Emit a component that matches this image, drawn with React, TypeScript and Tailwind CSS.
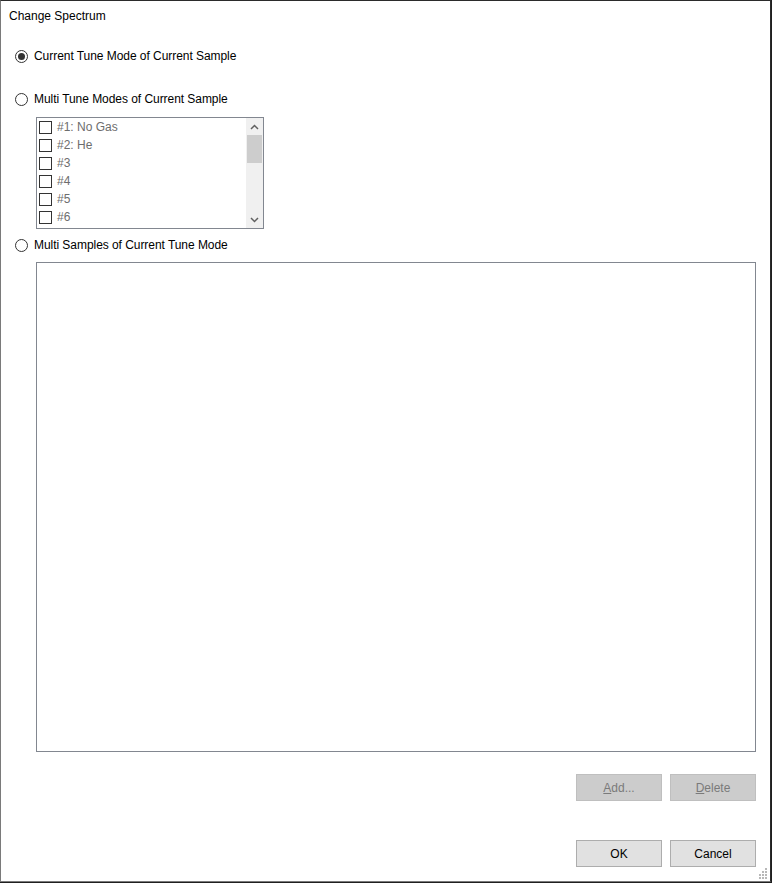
import React from "react";

const font = { fontFamily: '"Liberation Sans", Arial, sans-serif' };

function Radio({ checked, label }: { checked?: boolean; label: string }) {
  return (
    <div className="flex items-center h-[16px] ml-[14px]">
      <div className="w-[13px] h-[13px] rounded-full border border-[#333333] bg-white flex items-center justify-center">
        {checked && <div className="w-[7px] h-[7px] rounded-full bg-[#333333]" />}
      </div>
      <span className="ml-[6px] text-[12px] leading-[16px] text-black tracking-[-0.05px]">{label}</span>
    </div>
  );
}

const items = ["#1: No Gas", "#2: He", "#3", "#4", "#5", "#6"];

function Btn({ children, disabled }: { children: React.ReactNode; disabled?: boolean }) {
  return (
    <div
      className={
        "w-[86px] h-[27px] flex items-center justify-center text-[12px] border " +
        (disabled
          ? "bg-[#cccccc] border-[#bfbfbf] text-[#7a7a7a]"
          : "bg-[#e1e1e1] border-[#adadad] text-black")
      }
    >
      {children}
    </div>
  );
}

export default function App() {
  return (
    <div className="w-[772px] h-[883px] bg-[#1f1f1f]" style={font}>
      <div className="relative w-[771px] h-[882px] bg-white border border-t-[#2b2b2b] border-r-[#2b2b2b] border-l-[#7a7a7a] border-b-[#7a7a7a] flex flex-col">
        <div className="pt-[7px] pl-[8px] text-[12px] leading-[16px] text-black">Change Spectrum</div>

        <div className="mt-[24px]">
          <Radio checked label="Current Tune Mode of Current Sample" />
        </div>
        <div className="mt-[27px]">
          <Radio label="Multi Tune Modes of Current Sample" />
        </div>

        <div className="mt-[10px] ml-[35px] w-[228px] h-[112px] border border-[#828790] bg-white flex">
          <div className="flex-1 flex flex-col pl-[2px]">
            {items.map((t) => (
              <div key={t} className="h-[18px] flex items-center">
                <div className="w-[13px] h-[13px] border border-[#333333] bg-white" />
                <span className="ml-[5px] text-[12px] leading-[16px] text-[#6d6d6d]">{t}</span>
              </div>
            ))}
          </div>
          <div className="w-[17px] h-full bg-[#f0f0f0] flex flex-col">
            <div className="h-[17px] flex items-center justify-center">
              <svg width="9" height="6" viewBox="0 0 9 6">
                <path d="M1 5 L4.5 1.5 L8 5" stroke="#606060" strokeWidth="1.5" fill="none" />
              </svg>
            </div>
            <div className="mx-[1px] h-[28px] bg-[#cdcdcd]" />
            <div className="flex-1" />
            <div className="h-[17px] flex items-center justify-center">
              <svg width="9" height="6" viewBox="0 0 9 6">
                <path d="M1 1 L4.5 4.5 L8 1" stroke="#606060" strokeWidth="1.5" fill="none" />
              </svg>
            </div>
          </div>
        </div>

        <div className="mt-[8px]">
          <Radio label="Multi Samples of Current Tune Mode" />
        </div>

        <div className="mt-[9px] ml-[35px] w-[720px] h-[490px] border border-[#828790] bg-white" />

        <div className="mt-[22px] ml-[35px] w-[720px] flex justify-end gap-[8px]">
          <Btn disabled>
            <span>
              <span className="underline">A</span>dd...
            </span>
          </Btn>
          <Btn disabled>
            <span>
              <span className="underline">D</span>elete
            </span>
          </Btn>
        </div>

        <div className="mt-[39px] ml-[35px] w-[720px] flex justify-end gap-[8px]">
          <Btn>OK</Btn>
          <Btn>Cancel</Btn>
        </div>

        <svg className="absolute right-[2px] bottom-[2px]" width="11" height="11" viewBox="0 0 11 11">
          {[
            [8, 0],
            [8, 3],
            [5, 3],
            [8, 6],
            [5, 6],
            [2, 6],
            [8, 9],
            [5, 9],
            [2, 9],
          ].map(([x, y], i) => (
            <rect key={i} x={x} y={y} width="2" height="2" fill="#b8b8b8" />
          ))}
        </svg>
      </div>
    </div>
  );
}
